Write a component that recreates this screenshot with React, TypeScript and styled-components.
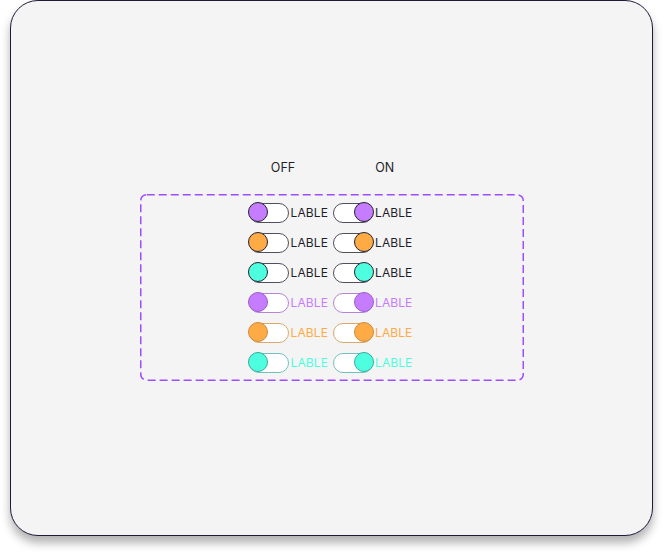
import React, { FC } from 'react';
import styled, { createGlobalStyle } from 'styled-components';

const GlobalStyle = createGlobalStyle`
  body {
    margin: 0;
    background: #ffffff;
    font-family: Inter, "Liberation Sans", sans-serif;
  }
`;

const Page = styled.div`
  width: 664px;
  height: 557px;
  padding-left: 10px;
  box-sizing: border-box;
`;

const Card = styled.div`
  width: 643px;
  height: 536px;
  box-sizing: border-box;
  background: #f4f4f4;
  border: 1px solid #1c1b3a;
  border-radius: 28px;
  box-shadow: 0 7px 10px rgba(0, 0, 0, 0.3);
  display: flex;
  flex-direction: column;
  align-items: center;
  padding-top: 160px;
`;

const HeaderRow = styled.div`
  display: flex;
  gap: 80px;
  height: 14px;
  margin-bottom: 19px;
  padding-left: 2px;
  font-size: 12.5px;
  line-height: 14px;
  color: #1e1e2a;
`;

// dashed outline drawn as svg so the dash length matches (8 on / 4 off)
const dashed = encodeURIComponent(
  `<svg xmlns="http://www.w3.org/2000/svg" width="384" height="187"><rect x="0.75" y="0.75" width="382.5" height="185.5" rx="6" ry="6" fill="none" stroke="#9d4dff" stroke-width="1.5" stroke-dasharray="8 4"/></svg>`
);

const Showcase = styled.div`
  width: 384px;
  height: 187px;
  box-sizing: border-box;
  background: url("data:image/svg+xml,${dashed}") no-repeat;
  padding: 9px 2px 0 0;
  display: flex;
  flex-direction: column;
  align-items: center;
  gap: 10px;
`;

const Row = styled.div`
  display: flex;
  gap: 5px;
`;

const Item = styled.div`
  display: flex;
  align-items: center;
  gap: 2px;
`;

const Track = styled.div<{ $line: string }>`
  position: relative;
  width: 40px;
  height: 20px;
  box-sizing: border-box;
  border: 1.8px solid ${(p) => p.$line};
  border-radius: 10px;
  background: #ffffff;
`;

const Knob = styled.div<{ $on: boolean; $fill: string; $edge: string }>`
  position: absolute;
  top: -1.8px;
  ${(p) => (p.$on ? 'right: -1.8px;' : 'left: -1.8px;')}
  width: 20px;
  height: 20px;
  box-sizing: border-box;
  border-radius: 50%;
  background: ${(p) => p.$fill};
  border: 1.5px solid ${(p) => p.$edge};
`;

const Label = styled.span<{ $color: string }>`
  font-size: 12px;
  line-height: 20px;
  letter-spacing: 0.1px;
  color: ${(p) => p.$color};
`;

type Variant = { fill: string; edge: string; line: string; text: string };

const variants: Variant[] = [
  { fill: '#c67cff', edge: '#232132', line: '#4f4f5e', text: '#1e1e2a' },
  { fill: '#ffab45', edge: '#232132', line: '#4f4f5e', text: '#1e1e2a' },
  { fill: '#4dffdf', edge: '#232132', line: '#4f4f5e', text: '#1e1e2a' },
  { fill: '#c67cff', edge: '#9a5cc8', line: '#b484d8', text: '#c67cff' },
  { fill: '#ffab45', edge: '#c98b44', line: '#d9a870', text: '#ffab45' },
  { fill: '#4dffdf', edge: '#3aa8a0', line: '#72bfc2', text: '#4dffdf' },
];

const Toggle: FC<{ on: boolean; v: Variant }> = ({ on, v }) => (
  <Item>
    <Track $line={v.line}>
      <Knob $on={on} $fill={v.fill} $edge={v.edge} />
    </Track>
    <Label $color={v.text}>LABLE</Label>
  </Item>
);

const App: FC = () => {
  return (
    <Page>
      <GlobalStyle />
      <Card>
        <HeaderRow>
          <span>OFF</span>
          <span>ON</span>
        </HeaderRow>
        <Showcase>
          {variants.map((v, i) => (
            <Row key={i}>
              <Toggle on={false} v={v} />
              <Toggle on={true} v={v} />
            </Row>
          ))}
        </Showcase>
      </Card>
    </Page>
  );
};

export default App;
